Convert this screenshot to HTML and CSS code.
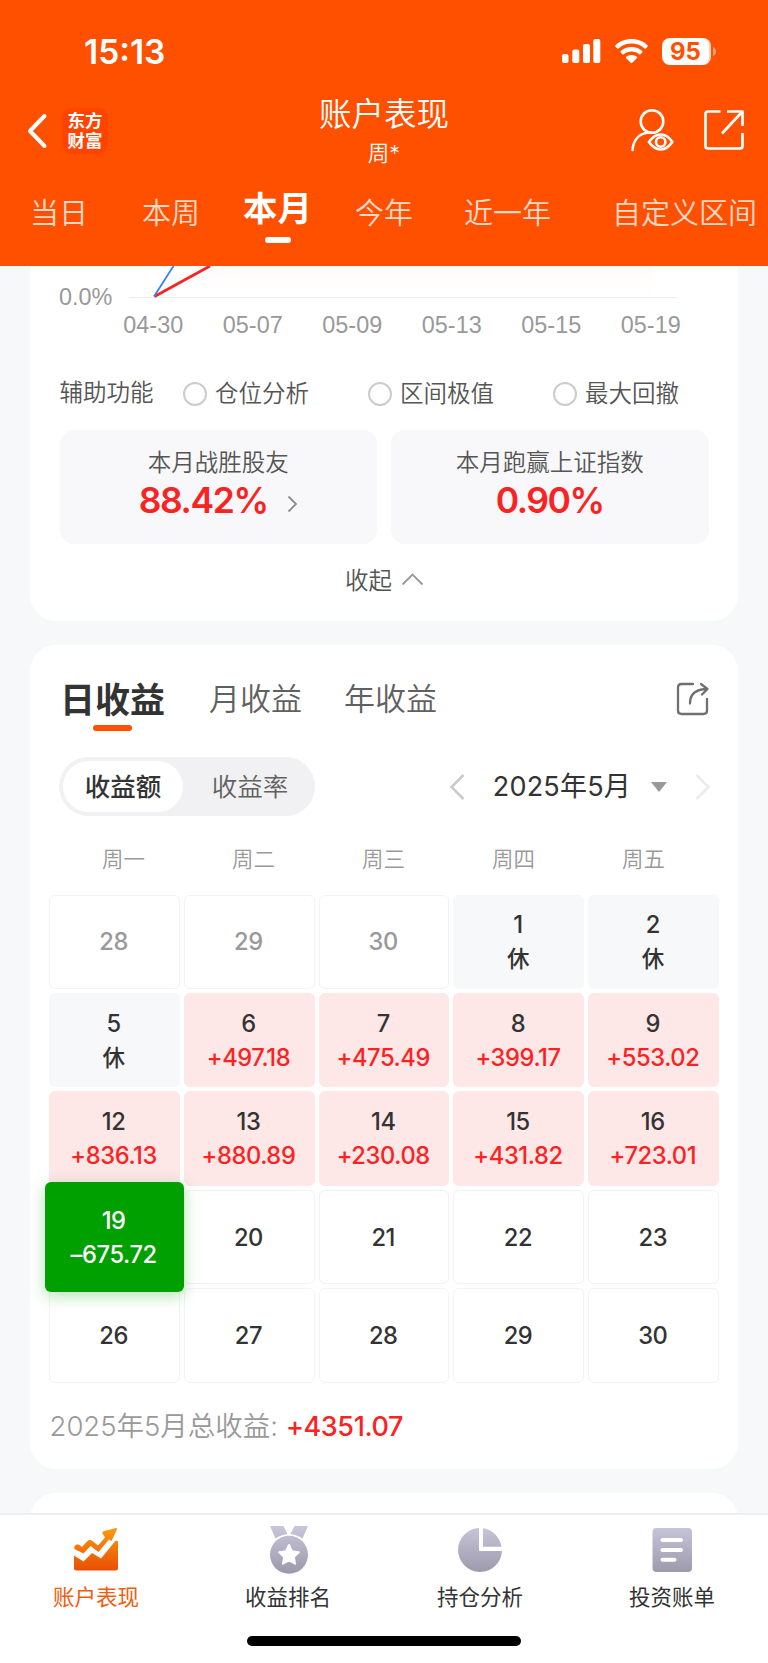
FILE: index.html
```
<!DOCTYPE html>
<html lang="zh-CN">
<head>
    <meta charset="UTF-8">
    <meta name="viewport" content="width=device-width, initial-scale=1.0">
    <title>账户表现</title>
    <link rel="stylesheet" href="styles.css">
</head>
<body>
    <header class="header">
        <div class="status-bar">
            <span class="time">15:13</span>
            <div class="status-icons">
                <svg class="signal" width="39" height="25" viewBox="0 0 39 25" fill="#fff">
                    <rect x="0" y="15" width="6.5" height="9" rx="2"/>
                    <rect x="10.3" y="10.5" width="7" height="13.5" rx="2"/>
                    <rect x="21" y="5" width="7" height="19" rx="2"/>
                    <rect x="31.3" y="0" width="7" height="24" rx="2"/>
                </svg>
                <svg class="wifi" width="33" height="25" viewBox="0 0 33 25" fill="#fff">
                    <path d="M16.5 0C10 0 4.500 2.300 0.500 6.200c-.5.5-.5 1 0 1.500l1.700 1.700c.4.400 1 .4 1.400 0C7 6.200 11.500 4.600 16.500 4.600s9.500 1.600 12.900 4.800c.4.400 1 .4 1.400 0l1.700-1.700c.5-.5.5-1 0-1.500C28.500 2.300 23 0 16.500 0z"/>
                    <path d="M16.500 7.900c-4.200 0-7.900 1.500-10.700 4.100-.5.5-.5 1 0 1.500l1.700 1.700c.4.400 1 .4 1.400 0 2.100-1.800 4.700-2.800 7.600-2.800s5.500 1 7.600 2.800c.4.400 1 .4 1.400 0l1.700-1.700c.5-.5.5-1 0-1.500-2.800-2.600-6.500-4.100-10.700-4.100z"/>
                    <path d="M16.500 15.900c-2 0-3.900.7-5.300 1.900-.5.400-.5 1 0 1.500l4.500 4.500c.5.500 1.100.5 1.600 0l4.500-4.500c.5-.5.5-1.100 0-1.500-1.400-1.200-3.300-1.900-5.300-1.900z"/>
                </svg>
                <div class="battery"><span class="battery-level">95</span></div>
                <svg class="battery-tip" width="4" height="9" viewBox="0 0 4 9"><path d="M0 0q3 1.500 3 4.500T0 9z" fill="#ffa27a"/></svg>
            </div>
        </div>

        <div class="nav-bar">
            <div class="nav-left">
                <svg width="22" height="36" viewBox="0 0 22 36" fill="none" stroke="#fff" stroke-width="4" stroke-linecap="round" stroke-linejoin="round"><path d="M18.500 3L4 18l14.500 15"/></svg>
                <div class="logo"><span>东方</span><span>财富</span></div>
            </div>
            <div class="nav-title">
                <h1>账户表现</h1>
                <p>周*</p>
            </div>
            <div class="nav-right">
                <svg width="44" height="44" viewBox="0 0 44 44" fill="none" stroke="#fff" stroke-width="2.600" stroke-linecap="round">
                    <circle cx="22" cy="13.500" r="11.300"/>
                    <path d="M2.500 42C3.500 31 10 24.500 21 24.500"/>
                    <path d="M19 34q5-7.500 11.700-7.500T42.300 34q-5 7.500-11.600 7.500T19 34z"/>
                    <circle cx="30.700" cy="34" r="4.700"/>
                </svg>
                <svg width="42" height="42" viewBox="0 0 42 42" fill="none" stroke="#fff" stroke-width="2.700" stroke-linejoin="round">
                    <path d="M17.500 2.500H5Q2.500 2.500 2.500 5v32q0 2.500 2.500 2.500h32q2.500 0 2.500-2.500V24"/>
                    <path d="M24 2.500h15.500V17M39 3L19 24.500"/>
                </svg>
            </div>
        </div>

        <nav class="range-tabs">
            <span>当日</span>
            <span>本周</span>
            <span class="active">本月</span>
            <span>今年</span>
            <span>近一年</span>
            <span>自定义区间</span>
        </nav>
    </header>

    <main class="content">
        <section class="card chart-card">
            <div class="chart">
                <span class="axis-label">0.0%</span>
                <svg width="548" height="34" viewBox="0 0 548 34" fill="none">
                    <defs>
                        <linearGradient id="area" x1="0" y1="0" x2="0" y2="1">
                            <stop offset="0" stop-color="#fffbfb"/>
                            <stop offset="1" stop-color="#ffffff"/>
                        </linearGradient>
                    </defs>
                    <path d="M25 31L81 0H523V31z" fill="url(#area)"/>
                    <path d="M0 31.500H547.500" stroke="#ececec"/>
                    <path d="M25.500 30.500L81 0" stroke="#f82424" stroke-width="2.800"/>
                    <path d="M25 30.500L44.500 0" stroke="#3b82f6" stroke-width="1.800"/>
                </svg>
            </div>
            <div class="dates">
                <span>04-30</span>
                <span>05-07</span>
                <span>05-09</span>
                <span>05-13</span>
                <span>05-15</span>
                <span>05-19</span>
            </div>

            <div class="options">
                <span class="options-title">辅助功能</span>
                <label class="option"><i class="radio"></i>仓位分析</label>
                <label class="option"><i class="radio"></i>区间极值</label>
                <label class="option"><i class="radio"></i>最大回撤</label>
            </div>

            <div class="stats">
                <div class="stat">
                    <p class="stat-label">本月战胜股友</p>
                    <p class="stat-value">88.42%
                        <svg width="11" height="18" viewBox="0 0 11 18" fill="none" stroke="#8c8c8c" stroke-width="1.800"><path d="M1.500 1.500L9 9l-7.500 7.500"/></svg>
                    </p>
                </div>
                <div class="stat">
                    <p class="stat-label">本月跑赢上证指数</p>
                    <p class="stat-value">0.90%</p>
                </div>
            </div>

            <div class="collapse">收起
                <svg width="23" height="14" viewBox="0 0 23 14" fill="none" stroke="#999" stroke-width="1.800"><path d="M1.500 12.500l10-10 10 10"/></svg>
            </div>
        </section>

        <section class="card profit-card">
            <div class="profit-tabs">
                <span class="active">日收益</span>
                <span>月收益</span>
                <span>年收益</span>
                <svg class="share" width="34" height="34" viewBox="0 0 34 34" fill="none" stroke="#707070" stroke-width="2.300" stroke-linecap="round" stroke-linejoin="round">
                    <path d="M17 2H5.500Q2 2 2 5.500v23Q2 32 5.500 32h22q3.500 0 3.500-3.500V17"/>
                    <path d="M14 21.500C14 12 20 7 31.500 7M25 2l6.500 5L26 12.500"/>
                </svg>
            </div>

            <div class="toolbar">
                <div class="segment">
                    <span class="active">收益额</span>
                    <span>收益率</span>
                </div>
                <div class="month">
                    <svg width="16" height="28" viewBox="0 0 16 28" fill="none" stroke="#ccc" stroke-width="2.600"><path d="M14.500 2L2.500 14l12 12"/></svg>
                    <span class="month-text">2025年5月</span>
                    <svg class="triangle" width="16" height="10" viewBox="0 0 16 10"><path d="M0 0h16L8 10z" fill="#999"/></svg>
                    <svg width="16" height="28" viewBox="0 0 16 28" fill="none" stroke="#ebebeb" stroke-width="2.600"><path d="M1.500 2l12 12-12 12"/></svg>
                </div>
            </div>

            <div class="weekdays">
                <span>周一</span>
                <span>周二</span>
                <span>周三</span>
                <span>周四</span>
                <span>周五</span>
            </div>

            <div class="calendar">
                <div class="day muted">28</div>
                <div class="day muted">29</div>
                <div class="day muted">30</div>
                <div class="day rest">1<span>休</span></div>
                <div class="day rest">2<span>休</span></div>

                <div class="day rest">5<span>休</span></div>
                <div class="day up">6<span>+497.18</span></div>
                <div class="day up">7<span>+475.49</span></div>
                <div class="day up">8<span>+399.17</span></div>
                <div class="day up">9<span>+553.02</span></div>

                <div class="day up">12<span>+836.13</span></div>
                <div class="day up">13<span>+880.89</span></div>
                <div class="day up">14<span>+230.08</span></div>
                <div class="day up">15<span>+431.82</span></div>
                <div class="day up">16<span>+723.01</span></div>

                <div class="day down">19<span>–675.72</span></div>
                <div class="day">20</div>
                <div class="day">21</div>
                <div class="day">22</div>
                <div class="day">23</div>

                <div class="day">26</div>
                <div class="day">27</div>
                <div class="day">28</div>
                <div class="day">29</div>
                <div class="day">30</div>
            </div>

            <div class="total">2025年5月总收益: <b>+4351.07</b></div>
        </section>

        <section class="card next-card"></section>
    </main>

    <footer class="tab-bar">
        <svg width="0" height="0" class="defs">
            <defs>
                <linearGradient id="orange" x1="0" y1="0" x2="0" y2="1">
                    <stop offset="0" stop-color="#fb9a0c"/>
                    <stop offset="1" stop-color="#ea4f04"/>
                </linearGradient>
                <linearGradient id="grey" gradientUnits="userSpaceOnUse" x1="0" y1="2" x2="0" y2="48">
                    <stop offset="0" stop-color="#c8c6d9"/>
                    <stop offset="1" stop-color="#9c9aab"/>
                </linearGradient>
            </defs>
        </svg>
        <div class="tabs">
            <div class="tab active">
                <svg width="48" height="50" viewBox="0 0 48 50">
                    <path fill="url(#orange)" d="M2.500 25c-1-3 2-5.500 5-4l2.500 2 5.500-6q2.500-2 5 0l5.500 4.500L33 13.500l-2.500-4q-.5-2 1-2.200L44 4q1.200 0 1 1.200L39.500 17l-2.500-1.500L26.500 28l-8-6-7 7.500zM2 31.500l9.500 6 8.500-8.500 9 5.500L42.500 18q1.500-1.800 3.500-.8V44q0 2.500-2.500 2.500h-39Q2 46.500 2 44z"/>
                </svg>
                <span>账户表现</span>
            </div>
            <div class="tab">
                <svg width="48" height="50" viewBox="-1 0 48 50">
                    <path fill="url(#grey)" d="M5 2h13.500l4 8Q15 11 10.500 14.500zM43 2H29.500l-4 8Q33 11 37.500 14.500z"/>
                    <circle cx="24" cy="30.800" r="19" fill="url(#grey)"/>
                    <path fill="#fff" stroke="#fff" stroke-width="2" stroke-linejoin="round" d="M24 21l3 6.300 6.800.9-5 4.700 1.300 6.800-6.100-3.400-6.100 3.400 1.300-6.800-5-4.700 6.800-.9z"/>
                </svg>
                <span>收益排名</span>
            </div>
            <div class="tab">
                <svg width="48" height="50" viewBox="0 0 48 50" fill="url(#grey)">
                    <path d="M23 4v23h23A22 22 0 1 1 23 4z"/>
                    <path d="M27 4.200A22 22 0 0 1 45.500 22.800H27z"/>
                </svg>
                <span>持仓分析</span>
            </div>
            <div class="tab">
                <svg width="48" height="50" viewBox="0 0 48 50">
                    <rect x="4.500" y="4" width="39.500" height="44" rx="4" fill="url(#grey)"/>
                    <path d="M14.500 16h18.500M14.500 26h18.500M14.500 35.800h12" stroke="#fff" stroke-width="4" stroke-linecap="round"/>
                </svg>
                <span>投资账单</span>
            </div>
        </div>
        <div class="home-indicator"></div>
    </footer>
</body>
</html>
```
FILE: styles.css
```
* {
    box-sizing: border-box;
}

body {
    font-family: Inter, 'Noto Sans CJK SC', sans-serif;
    font-weight: 400;
    background-color: #f7f8fa;
    color: #333;
    margin: 0;
    width: 768px;
    height: 1663px;
    overflow: hidden;
    display: flex;
    flex-direction: column;
}

h1, p {
    margin: 0;
    font-weight: normal;
}

svg {
    display: block;
    flex-shrink: 0;
}

/* header */
.header {
    height: 266px;
    flex-shrink: 0;
    background-color: #ff5000;
    color: #fff;
}

.status-bar {
    height: 90px;
    padding: 37px 51px 0 84px;
    display: flex;
    justify-content: space-between;
}

.time {
    font-size: 33.5px;
    font-weight: 600;
    line-height: 30px;
}

.status-icons {
    display: flex;
    align-items: center;
    height: 28px;
}

.wifi {
    margin: 0 14px 0 14px;
}

.battery {
    width: 49px;
    height: 27px;
    border-radius: 8px;
    background-color: #fff;
    border-right: 2px solid #ffd0bc;
    text-align: center;
}

.battery-level {
    display: block;
    color: #ff5000;
    font-size: 24px;
    font-weight: 700;
    line-height: 27px;
}

.battery-tip {
    margin-left: 2px;
}

.nav-bar {
    height: 90px;
    display: grid;
    grid-template-columns: 1fr auto 1fr;
}

.nav-left {
    display: flex;
    align-items: center;
    gap: 14px;
    padding: 0 0 8px 26px;
}

.logo {
    width: 46px;
    height: 46px;
    border-radius: 9px;
    background-color: #ff4400;
    font-family: 'Noto Sans CJK SC', sans-serif;
    font-size: 17.5px;
    font-weight: 700;
    line-height: 19.5px;
    text-align: center;
    padding-top: 2px;
}

.logo span {
    display: block;
}

.nav-title {
    text-align: center;
}

.nav-title h1 {
    font-size: 32.5px;
    line-height: 50px;
    font-weight: 350;
}

.nav-title p {
    font-size: 21.5px;
    line-height: 27px;
    font-weight: 350;
}

.nav-right {
    display: flex;
    justify-content: flex-end;
    align-items: center;
    gap: 29px;
    padding: 0 23px 10px 0;
}

.range-tabs {
    display: grid;
    grid-template-columns: 112px 101px 112px 109px 148px 150px;
    padding-left: 30px;
    font-size: 29px;
    font-weight: 350;
    line-height: 68px;
    white-space: nowrap;
    color: #ffd9c8;
}

.range-tabs .active {
    color: #fff;
    font-size: 34.5px;
    font-weight: 700;
    line-height: 57px;
}

.range-tabs .active::after {
    content: '';
    display: block;
    width: 26px;
    height: 6px;
    border-radius: 3px;
    background-color: #fff;
    margin-left: 22px;
}

/* cards */
.content {
    flex: 1;
    min-height: 0;
    overflow: hidden;
}

.card {
    width: 708px;
    margin: 0 auto 24px;
    background-color: #fff;
    border-radius: 26px;
}

.chart-card {
    height: 355px;
    border-radius: 0 0 26px 26px;
}

.chart {
    display: flex;
    height: 34px;
    padding-left: 29px;
}

.axis-label {
    width: 70px;
    font-family: 'Liberation Sans', sans-serif;
    font-size: 23.4px;
    line-height: 62px;
    color: #999;
}

.dates {
    display: flex;
    margin-left: 73.5px;
    font-family: 'Liberation Sans', sans-serif;
    font-size: 23.4px;
    line-height: 50px;
    height: 48px;
    color: #999;
}

.dates span {
    width: 99.5px;
    text-align: center;
}

.options {
    display: flex;
    align-items: center;
    height: 48px;
    margin-top: 21.5px;
    padding-left: 29.5px;
    font-size: 23.5px;
    font-weight: 350;
    line-height: 46px;
    color: #555;
}

.options-title {
    width: 123.5px;
    height: 48px;
}

.option {
    display: flex;
    align-items: center;
    gap: 8px;
    width: 185px;
    white-space: nowrap;
}

.radio {
    width: 24px;
    height: 24px;
    border: 2px solid #ccc;
    border-radius: 50%;
    flex-shrink: 0;
}

.stats {
    display: grid;
    grid-template-columns: 1fr 1fr;
    gap: 14px;
    padding: 0 29.5px;
    margin-top: 12.5px;
}

.stat {
    height: 114px;
    padding-top: 15px;
    border-radius: 14px;
    background-color: #f8f8fa;
    text-align: center;
}

.stat-label {
    font-size: 23.5px;
    line-height: 35px;
    font-weight: 350;
    color: #555;
}

.stat-value {
    display: flex;
    justify-content: center;
    align-items: center;
    gap: 19px;
    font-size: 35.5px;
    font-weight: 600;
    line-height: 41px;
    color: #f82424;
    letter-spacing: -1.4px;
}

.stat-value svg {
    margin-top: 6px;
}

.collapse {
    display: flex;
    justify-content: center;
    align-items: center;
    gap: 9px;
    height: 70px;
    padding-left: 1px;
    font-size: 23.5px;
    font-weight: 350;
    color: #555;
}

/* profit calendar */
.profit-card {
    height: 824px;
    padding-top: 24px;
}

.profit-tabs {
    display: flex;
    height: 64px;
    padding-left: 30px;
    font-size: 31px;
    font-weight: 350;
    line-height: 60px;
    color: #606060;
}

.profit-tabs span {
    margin-right: 42px;
}

.profit-tabs .active {
    color: #333;
    font-size: 35px;
    font-weight: 700;
    line-height: 62px;
    margin-right: 44px;
}

.profit-tabs .active::after {
    content: '';
    display: block;
    width: 39px;
    height: 6px;
    border-radius: 3px;
    background-color: #ff5000;
    margin: -6px 0 0 33px;
}

.share {
    margin: 13px 28px 0 auto;
}

.toolbar {
    display: flex;
    justify-content: space-between;
    margin-top: 24px;
    padding: 0 27px 0 29px;
}

.segment {
    display: flex;
    width: 256px;
    height: 59px;
    padding: 4px;
    border-radius: 30px;
    background-color: #f1f1f4;
    font-size: 25.500px;
    font-weight: 350;
    line-height: 51px;
    text-align: center;
    color: #606060;
}

.segment span {
    flex: 1;
    padding-left: 6px;
}

.segment .active {
    flex: 0 0 120px;
    padding: 0;
    border-radius: 26px;
    background-color: #fff;
    color: #333;
    font-weight: 500;
}

.month {
    display: flex;
    align-items: center;
    height: 59px;
}

.month-text {
    font-size: 27px;
    line-height: 59px;
    height: 59px;
    letter-spacing: 0.2px;
    margin: 0 20px 0 27.5px;
}

.triangle {
    margin-right: 28px;
}

.weekdays {
    display: flex;
    padding-left: 28.5px;
    margin-top: 21.5px;
    font-size: 21.500px;
    line-height: 42px;
    text-align: center;
    color: #999;
    font-weight: 350;
}

.weekdays span {
    width: 130px;
}

.calendar {
    display: grid;
    grid-template-columns: repeat(5, 1fr);
    grid-auto-rows: 94.3px;
    gap: 4.2px 4px;
    margin: 15px 19px 0;
}

.day {
    display: flex;
    flex-direction: column;
    justify-content: center;
    align-items: center;
    padding: 1px 1.5px 0 0;
    border: 1px solid #f3f3f4;
    border-radius: 6px;
    font-size: 23.7px;
    font-weight: 500;
    line-height: 34px;
    letter-spacing: -0.4px;
}

.muted {
    color: #999;
}

.rest {
    background-color: #f7f8fa;
    border-color: #f7f8fa;
}

.rest span {
    font-size: 22.5px;
}

.up {
    background-color: #fee7e7;
    border-color: #fee7e7;
}

.up span {
    color: #fb2222;
}

/* selected day grows over its neighbours */
.down {
    z-index: 1;
    margin: -8px -4px;
    border: none;
    background-color: #00a000;
    color: #fff;
    box-shadow: 0 4px 16px rgba(0, 160, 0, 0.3);
}

.total {
    padding-left: 19.5px;
    margin-top: 20.5px;
    font-size: 27.5px;
    font-weight: 350;
    line-height: 46px;
    color: #999;
}

.total b {
    font-size: 27px;
    font-weight: 500;
    letter-spacing: -0.4px;
    color: #fb2222;
}

.next-card {
    height: 200px;
}

/* bottom tabs */
.tab-bar {
    height: 150px;
    flex-shrink: 0;
    border-top: 2px solid #eee;
    background-color: #fff;
}

.defs {
    height: 0;
}

.tabs {
    display: flex;
    height: 121px;
    padding-top: 9px;
}

.tab {
    width: 192px;
    display: flex;
    flex-direction: column;
    align-items: center;
    font-size: 21.500px;
    line-height: 46px;
}

.tab.active {
    color: #f25c0c;
}

.home-indicator {
    width: 274px;
    height: 10px;
    border-radius: 5px;
    background-color: #000;
    margin: 0 auto;
}
```
